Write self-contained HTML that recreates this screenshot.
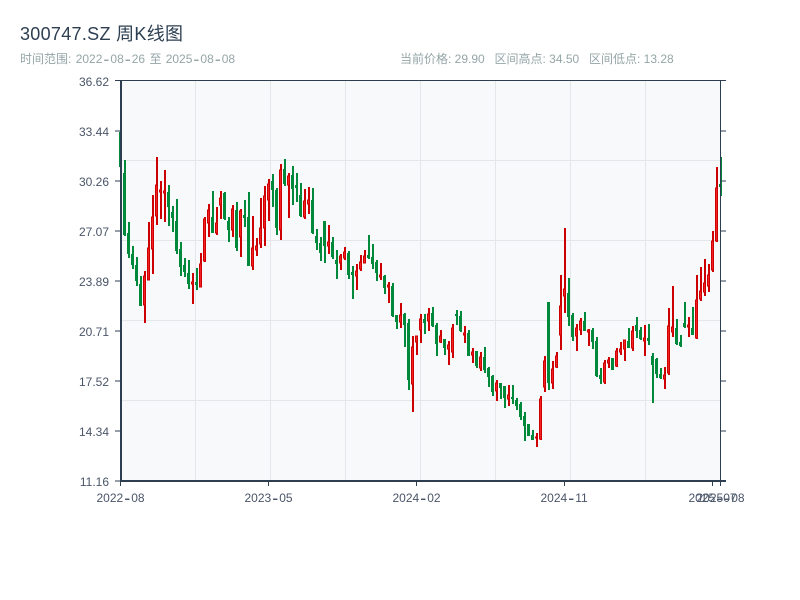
<!DOCTYPE html>
<html><head><meta charset="utf-8"><title>300747.SZ 周K线图</title>
<style>html,body{margin:0;padding:0;background:#fff;width:800px;height:600px;overflow:hidden}svg{display:block}text{font-family:"Liberation Sans","Noto Sans CJK SC",sans-serif}</style></head>
<body>
<svg width="800" height="600" viewBox="0 0 800 600" xmlns="http://www.w3.org/2000/svg">
<rect x="120" y="80" width="601" height="401" fill="#f8f9fa"/>
<path d="M195.5 81V481M270.5 81V481M345.5 81V481M420.5 81V481M495.5 81V481M570.5 81V481M645.5 81V481M121 160.5H720M121 240.5H720M121 320.5H720M121 400.5H720" stroke="#e3e6eb" stroke-width="1" fill="none"/>
<path fill="none" stroke="#00893a" stroke-width="2" d="M121 132V167M125 160V236M129 222V258M133 246V269M137 257V286M141 276V306M169 185V226M173 206V232M177 199V254M181 242V276M185 258V277M189 260V289M197 268V290M213 191V233M225 192V220M229 217V242M237 202V251M245 200V227M249 192V266M273 174V207M277 188V235M285 159V186M293 166V205M297 173V202M301 183V217M313 188V234M317 229V250M321 237V261M325 221V263M333 237V259M337 250V279M349 251V279M353 266V299M369 235V259M373 244V269M377 260V281M385 275V294M393 283V317M397 315V329M405 313V347M409 319V390M425 314V334M433 307V327M437 323V356M445 339V355M457 310V325M461 311V332M469 330V356M477 351V368M485 347V373M489 367V387M493 375V396M501 383V399M505 386V408M513 385V404M517 398V410M521 402V420M525 412V441M529 424V436M533 430V440M549 302V390M569 278V326M573 313V341M585 312V331M593 328V349M597 337V377M601 368V384M613 358V370M629 328V348M637 317V338M641 327V340M649 324V345M653 353V403M657 358V378M661 368V379M677 319V345M681 335V347M685 302V328M693 307V335M721 157V196"/>
<path fill="none" stroke="#00893a" stroke-width="3" d="M120.5 132V167M124.5 173V235M128.5 233V254M132.5 254V265M136.5 265V281M140.5 284V306M168.5 192V207M172.5 212V218M176.5 221V251M180.5 249V267M184.5 265V272M188.5 273V284M196.5 282V285M212.5 217V233M224.5 193V219M228.5 221V230M236.5 210V248M244.5 215V218M248.5 217V266M272.5 181V190M276.5 190V228M284.5 169V184M292.5 175V189M296.5 185V188M300.5 195V216M312.5 200V233M316.5 236V243M320.5 243V253M324.5 221V246M332.5 242V257M336.5 260V264M348.5 253V275M352.5 272V275M368.5 255V258M372.5 257V264M376.5 262V273M384.5 276V288M392.5 286V316M396.5 315V322M404.5 314V325M408.5 323V380M424.5 319V323M432.5 313V326M436.5 325V344M444.5 339V348M456.5 314V316M460.5 316V331M468.5 333V356M476.5 351V366M484.5 357V370M488.5 368V377M492.5 376V392M500.5 383V388M504.5 386V398M512.5 397V399M516.5 400V406M520.5 404V417M524.5 416V426M528.5 424V436M532.5 435V440M548.5 302V383M568.5 293V317M572.5 315V337M584.5 321V331M592.5 330V342M596.5 341V376M600.5 375V379M612.5 358V370M628.5 341V348M636.5 325V331M640.5 330V339M648.5 338V341M652.5 356V365M656.5 359V374M660.5 374V378M676.5 328V344M680.5 342V346M684.5 323V327M692.5 328V335M720.5 184V187"/>
<path fill="none" stroke="#cc0000" stroke-width="2" d="M145 271V323M149 222V280M153 195V274M157 157V225M161 181V219M165 170V222M193 273V304M201 253V287M205 217V262M209 204V237M217 207V235M221 191V219M233 205V237M241 209V257M253 216V270M257 238V256M261 198V248M265 186V246M269 179V221M281 164V240M289 173V218M305 189V219M309 187V214M329 225V254M341 254V270M345 247V260M357 264V290M361 255V271M365 250V263M381 263V280M389 282V303M401 303V328M413 336V412M417 336V355M421 314V343M429 308V331M441 330V343M449 341V365M453 324V358M465 326V343M473 348V363M481 352V371M497 380V401M509 385V406M537 433V447M541 396V440M545 356V392M553 361V389M557 352V368M561 275V350M565 228V313M577 324V351M581 318V335M589 329V346M605 360V384M609 357V368M617 348V367M621 342V355M625 340V361M633 326V351M645 325V356M665 367V389M669 308V375M673 286V337M689 317V337M697 275V339M701 267V301M705 259V296M709 264V292M713 231V272M717 167V242"/>
<path fill="#f52020" stroke="#cc0000" stroke-width="1" d="M143.5 276h2V305h-2zM147.5 248h2V280h-2zM151.5 217h2V249h-2zM155.5 185h2V216h-2zM159.5 190h2V192h-2zM163.5 191h2V193h-2zM191.5 282h2V284h-2zM199.5 264h2V287h-2zM203.5 219h2V261h-2zM207.5 210h2V223h-2zM215.5 223h2V233h-2zM219.5 198h2V205h-2zM231.5 209h2V230h-2zM239.5 211h2V237h-2zM251.5 248h2V266h-2zM255.5 246h2V250h-2zM259.5 228h2V244h-2zM263.5 196h2V228h-2zM267.5 184h2V200h-2zM279.5 170h2V230h-2zM287.5 176h2V185h-2zM303.5 201h2V217h-2zM307.5 200h2V204h-2zM327.5 242h2V246h-2zM339.5 256h2V263h-2zM343.5 252h2V258h-2zM355.5 271h2V276h-2zM359.5 262h2V269h-2zM363.5 256h2V263h-2zM379.5 275h2V277h-2zM387.5 285h2V287h-2zM399.5 315h2V322h-2zM411.5 347h2V384h-2zM415.5 336h2V342h-2zM419.5 319h2V330h-2zM427.5 314h2V321h-2zM439.5 336h2V342h-2zM447.5 345h2V349h-2zM451.5 328h2V352h-2zM463.5 333h2V335h-2zM471.5 352h2V355h-2zM479.5 357h2V368h-2zM495.5 383h2V391h-2zM507.5 395h2V399h-2zM535.5 437h2V438h-2zM539.5 399h2V439h-2zM543.5 361h2V387h-2zM551.5 369h2V383h-2zM555.5 356h2V367h-2zM559.5 306h2V335h-2zM563.5 289h2V296h-2zM575.5 328h2V336h-2zM579.5 321h2V330h-2zM587.5 330h2V332h-2zM603.5 363h2V382h-2zM607.5 360h2V363h-2zM615.5 351h2V366h-2zM619.5 349h2V352h-2zM623.5 340h2V349h-2zM631.5 331h2V348h-2zM643.5 338h2V341h-2zM663.5 375h2V379h-2zM667.5 326h2V373h-2zM671.5 327h2V332h-2zM687.5 325h2V327h-2zM695.5 300h2V338h-2zM699.5 291h2V299h-2zM703.5 283h2V292h-2zM707.5 275h2V286h-2zM711.5 241h2V270h-2zM715.5 188h2V241h-2z"/>
<g stroke="#2c3e50" fill="none">
<path stroke-width="1" d="M115 80.5H726M720.5 80V481M115 131H120M115 181H120M115 231H120M115 281H120M115 331H120M115 381H120M115 431H120M721 131H726M721 181H726M721 231H726M721 281H726M721 331H726M721 381H726M721 431H726M115 481H120M268.5 481V486M416.5 481V486M564.5 481V486M712.5 481V486M720.5 481V486M120.5 481V486"/>
<path stroke-width="2" d="M121 80V482M120 481H726"/>
</g>
<text x="20" y="40" font-size="18" fill="#2c3e50" textLength="163">300747.SZ 周K线图</text>
<g font-size="12" fill="#95a5a6">
<text x="20" y="63">时间范围:</text>
<text x="75.7" y="63">2022<tspan dx="1" dy="2" font-size="18">-</tspan><tspan dx="1" dy="-2">08</tspan><tspan dx="1" dy="2" font-size="18">-</tspan><tspan dx="1" dy="-2">26</tspan></text>
<text x="149.5" y="63">至</text>
<text x="165.7" y="63">2025<tspan dx="1" dy="2" font-size="18">-</tspan><tspan dx="1" dy="-2">08</tspan><tspan dx="1" dy="2" font-size="18">-</tspan><tspan dx="1" dy="-2">08</tspan></text>
<text x="400" y="63">当前价格: 29.90</text>
<text x="494.5" y="63">区间高点: 34.50</text>
<text x="589" y="63">区间低点: 13.28</text>
</g>
<g font-size="12" fill="#4a5568" text-anchor="end">
<text x="109" y="86">36.62</text>
<text x="109" y="136">33.44</text>
<text x="109" y="186">30.26</text>
<text x="109" y="236">27.07</text>
<text x="109" y="286">23.89</text>
<text x="109" y="336">20.71</text>
<text x="109" y="386">17.52</text>
<text x="109" y="436">14.34</text>
<text x="109" y="486">11.16</text>
</g>
<g font-size="12" fill="#4a5568">
<text x="96.5" y="502">2022<tspan dx="1" dy="2" font-size="18">-</tspan><tspan dx="1" dy="-2">08</tspan></text>
<text x="244.5" y="502">2023<tspan dx="1" dy="2" font-size="18">-</tspan><tspan dx="1" dy="-2">05</tspan></text>
<text x="392.5" y="502">2024<tspan dx="1" dy="2" font-size="18">-</tspan><tspan dx="1" dy="-2">02</tspan></text>
<text x="540.5" y="502">2024<tspan dx="1" dy="2" font-size="18">-</tspan><tspan dx="1" dy="-2">11</tspan></text>
<text x="688.5" y="502">2025<tspan dx="1" dy="2" font-size="18">-</tspan><tspan dx="1" dy="-2">07</tspan></text>
<text x="696.5" y="502">2025<tspan dx="1" dy="2" font-size="18">-</tspan><tspan dx="1" dy="-2">08</tspan></text>
</g>
</svg>
</body></html>
